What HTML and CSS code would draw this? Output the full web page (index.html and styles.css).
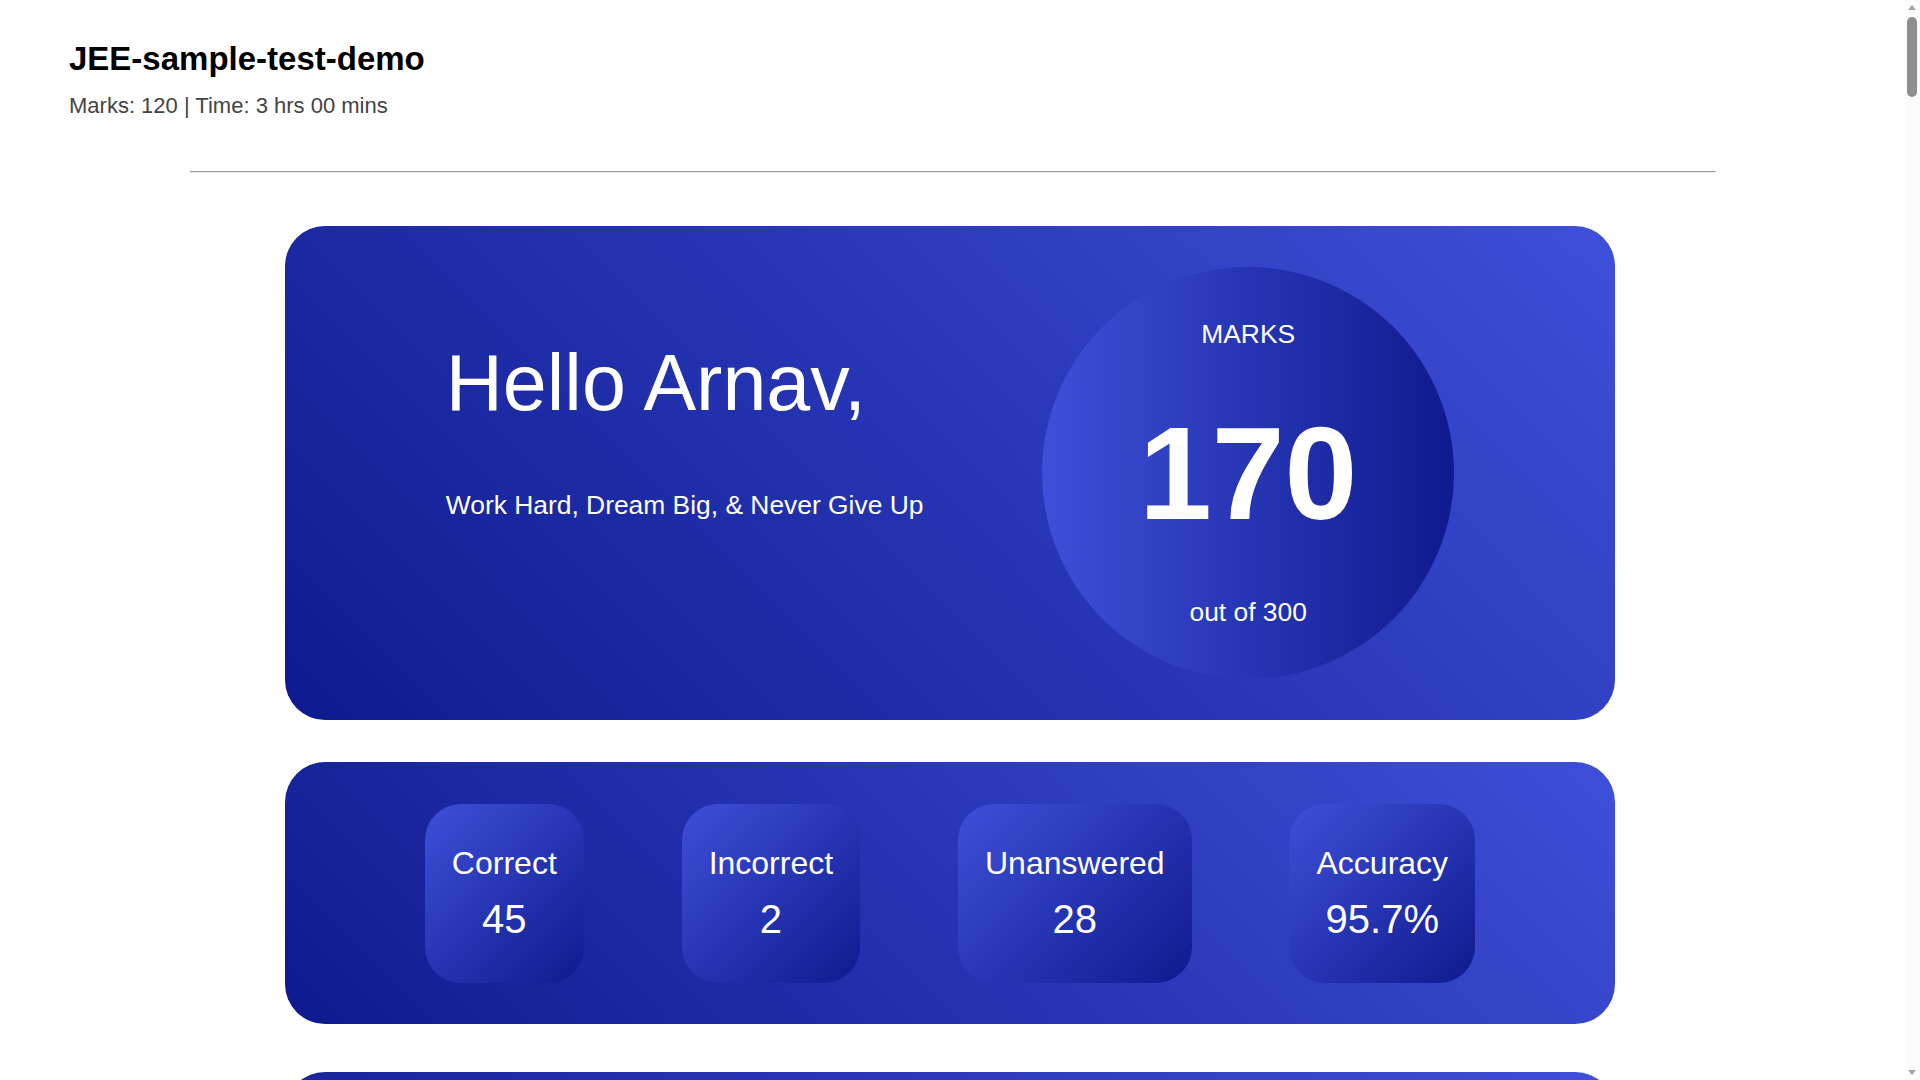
FILE: index.html
```html
<!DOCTYPE html>
<html lang="en">
<head>
    <meta charset="UTF-8">
    <meta name="viewport" content="width=device-width, initial-scale=1.0">
    <title>JEE-sample-test-demo | Result</title>
    <link rel="stylesheet" href="styles.css">
</head>
<body>
<header class="test-header">
    <h1 class="test-title">JEE-sample-test-demo</h1>
    <p class="test-meta">Marks: 120 | Time: 3 hrs 00 mins</p>
</header>

<hr class="divider">

<main class="report">
    <section class="card hero">
        <div class="greeting">
            <h2 class="greeting-name">Hello Arnav,</h2>
            <p class="greeting-quote">Work Hard, Dream Big, &amp; Never Give Up</p>
        </div>
        <div class="score-circle">
            <div class="score-label">MARKS</div>
            <div class="score-value">170</div>
            <div class="score-total">out of 300</div>
        </div>
    </section>

    <section class="card stats">
        <div class="stat">
            <div class="stat-label">Correct</div>
            <div class="stat-value">45</div>
        </div>
        <div class="stat">
            <div class="stat-label">Incorrect</div>
            <div class="stat-value">2</div>
        </div>
        <div class="stat">
            <div class="stat-label">Unanswered</div>
            <div class="stat-value">28</div>
        </div>
        <div class="stat">
            <div class="stat-label">Accuracy</div>
            <div class="stat-value">95.7%</div>
        </div>
    </section>

    <section class="card subjects">
        <h3 class="section-title">Subject-wise Performance</h3>
        <div class="subject-grid">
            <div class="stat">
                <div class="stat-label">Physics</div>
                <div class="stat-value">60</div>
            </div>
            <div class="stat">
                <div class="stat-label">Chemistry</div>
                <div class="stat-value">56</div>
            </div>
            <div class="stat">
                <div class="stat-label">Mathematics</div>
                <div class="stat-value">54</div>
            </div>
        </div>
    </section>

    <section class="review">
        <h3 class="review-title">Question Review</h3>
        <div id="question-list"></div>
    </section>
</main>

<!-- window scrollbar, as the browser shows it -->
<div class="scrollbar" aria-hidden="true">
    <span class="scroll-thumb"></span>
</div>

<script>
    const subjects = ["Physics", "Chemistry", "Mathematics"];
    const list = document.getElementById("question-list");

    for (let i = 1; i <= 75; i++) {
        let status = "Correct";
        if (i === 12 || i === 47) {
            status = "Incorrect";
        } else if (i % 8 === 0 || i % 7 === 0 || i > 66) {
            status = "Unanswered";
        }

        const item = document.createElement("div");
        item.className = "question";
        item.innerHTML = `
            <div class="question-head">Q${i} · ${subjects[Math.floor((i - 1) / 25)]}</div>
            <div class="question-text">Question ${i} of JEE-sample-test-demo</div>
            <div class="question-status ${status.toLowerCase()}">${status}</div>`;
        list.appendChild(item);
    }
</script>
</body>
</html>
```

FILE: styles.css
```css
/* --- base --- */
body {
    margin: 0;
    padding-right: 15px;
    font-family: "Liberation Sans", Arial, sans-serif;
    background: #ffffff;
    color: #000000;
}

.scrollbar {
    position: fixed;
    top: 0;
    right: 0;
    bottom: 0;
    width: 15px;
    background: #fbfbfb;
}

.scrollbar::before,
.scrollbar::after {
    content: "";
    position: absolute;
    left: 3px;
    border-left: 4.5px solid transparent;
    border-right: 4.5px solid transparent;
}

.scrollbar::before {
    top: 5px;
    border-bottom: 5px solid #a3a3a3;
}

.scrollbar::after {
    bottom: 5px;
    border-top: 5px solid #a3a3a3;
}

.scroll-thumb {
    position: absolute;
    top: 17px;
    left: 2px;
    width: 10px;
    height: 80px;
    border-radius: 5px;
    background: #8f8f8f;
}

.test-header {
    padding: 40px 69px 0;
}

.test-title {
    margin: 0 0 15px;
    font-size: 33px;
    font-weight: 700;
}

.test-meta {
    margin: 0;
    font-size: 22px;
    color: #444444;
}

.divider {
    width: 80%;
    margin: 52px auto 53px;
}

/* --- result cards --- */
.report {
    width: 1330px;
    margin: 0 auto;
    padding-right: 5px;
}

.card {
    padding: 41px 42px;
    border-radius: 40px;
    background: linear-gradient(45deg, #0e1a8e, #3e50d9);
    color: #ffffff;
}

.hero {
    display: flex;
    justify-content: space-evenly;
    align-items: flex-start;
    margin-bottom: 42px;
}

.greeting {
    margin-top: 70px;
}

.greeting-name {
    margin: 0;
    font-size: 79px;
    font-weight: 400;
}

.greeting-quote {
    margin: 61px 0 0;
    font-size: 26.4px;
}

.score-circle {
    width: 412px;
    height: 412px;
    border-radius: 50%;
    background: linear-gradient(90deg, #3e50d9, #0e1a8e);
    display: flex;
    flex-direction: column;
    align-items: center;
    justify-content: center;
    gap: 48px;
}

.score-label,
.score-total {
    font-size: 26.4px;
}

.score-value {
    font-size: 131px;
    font-weight: 700;
}

.stats {
    display: flex;
    justify-content: space-evenly;
    padding: 42px 42px 41px;
    margin-bottom: 48px;
}

.stat {
    display: flex;
    flex-direction: column;
    gap: 15px;
    padding: 41px 27px;
    border-radius: 36px;
    background: linear-gradient(135deg, #3e50d9, #0e1a8e);
    text-align: center;
}

.stat-label {
    font-size: 32px;
}

.stat-value {
    font-size: 40px;
}

.subjects {
    margin-bottom: 48px;
}

.section-title {
    margin: 0 0 30px;
    font-size: 32px;
    font-weight: 400;
    text-align: center;
}

.subject-grid {
    display: flex;
    justify-content: space-evenly;
}

/* --- question review --- */
.review-title {
    margin: 0 0 24px;
    font-size: 30px;
}

.question {
    padding: 24px 30px;
    margin-bottom: 20px;
    border: 1px solid #d6d9f2;
    border-radius: 20px;
}

.question-head {
    font-size: 22px;
    font-weight: 700;
    color: #1a2799;
    margin-bottom: 12px;
}

.question-text {
    font-size: 20px;
    color: #333333;
    margin-bottom: 12px;
}

.question-status {
    font-size: 18px;
}

.correct {
    color: #1f9d55;
}

.incorrect {
    color: #d93025;
}

.unanswered {
    color: #777777;
}
```
